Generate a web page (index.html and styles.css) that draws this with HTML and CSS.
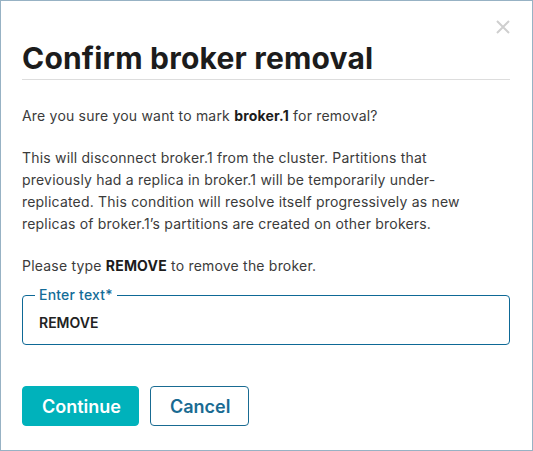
FILE: index.html
```html
<!DOCTYPE html>
<html>
<head>
<meta charset="utf-8">
<link rel="stylesheet" href="styles.css">
</head>
<body>
<div class="dialog">
  <button class="close" aria-label="Close">
    <svg width="14" height="14" viewBox="0 0 14 14"><path d="M1 1L13 13M13 1L1 13" stroke="#cfcfcf" stroke-width="2" fill="none"/></svg>
  </button>
  <h2 class="title">Confirm broker removal</h2>
  <div class="body">
    <p>Are you sure you want to mark <strong>broker.1</strong> for removal?</p>
    <p>This will disconnect broker.1 from the cluster. Partitions that previously had a replica in broker.1 will be temporarily under-replicated. This condition will resolve itself progressively as new replicas of broker.1’s partitions are created on other brokers.</p>
    <p class="last">Please type <strong>REMOVE</strong> to remove the broker.</p>
    <fieldset class="field">
      <legend>Enter text*</legend>
      <input class="input" type="text" value="REMOVE">
    </fieldset>
  </div>
  <div class="actions">
    <button class="btn primary">Continue</button>
    <button class="btn secondary">Cancel</button>
  </div>
</div>
</body>
</html>
```
FILE: styles.css
```css
* { box-sizing: border-box; }
html, body { margin: 0; padding: 0; background: #fff; }
body { font-family: Inter, "Noto Sans", sans-serif; color: #3b3b3b; }
.dialog {
  position: relative;
  width: 533px;
  height: 451px;
  border: 1px solid #97b2c4;
  padding: 36px 22px 0 21px;
}
.close {
  position: absolute;
  top: 19px;
  right: 22px;
  width: 14px;
  height: 14px;
  padding: 0;
  border: 0;
  background: none;
  display: flex;
}
.title {
  margin: 0;
  font-size: 30px;
  line-height: 42px;
  font-weight: 700;
  color: #1c1c1c;
  border-bottom: 1px solid #dddddd;
  padding-bottom: 0;
  letter-spacing: 0.2px;
}
.body { padding-top: 25px; font-size: 14px; line-height: 22px; letter-spacing: 0.2px; }
.body p { margin: 0 0 20px; max-width: 450px; }
.body p.last { margin-bottom: 10px; }
.body strong { font-weight: 700; color: #1c1c1c; }
.field {
  margin: 0;
  padding: 0 16px 10px;
  border: 1px solid #0e6996;
  border-radius: 4px;
}
.field legend {
  padding: 0 4px;
  margin-left: -4px;
  font-size: 14px;
  line-height: 16px;
  font-weight: 500;
  color: #146c98;
}
.input {
  display: block;
  border: 0;
  outline: none;
  padding: 0;
  width: 100%;
  font-family: Inter, sans-serif;
  font-size: 14px;
  font-weight: 600;
  color: #222;
  height: 24px;
  margin-top: 7px;
  letter-spacing: 0;
}
.actions { display: flex; gap: 11px; padding-top: 41px; }
.btn {
  height: 40px;
  border-radius: 4px;
  font-family: Inter, sans-serif;
  font-size: 18px;
  font-weight: 600;
  padding: 0 19px;
}
.primary { background: #00b2bb; color: #fff; border: 1px solid #00b2bb; width: 117px; }
.secondary { background: #fff; color: #196b92; border: 1px solid #196b92; width: 99px; }
```
